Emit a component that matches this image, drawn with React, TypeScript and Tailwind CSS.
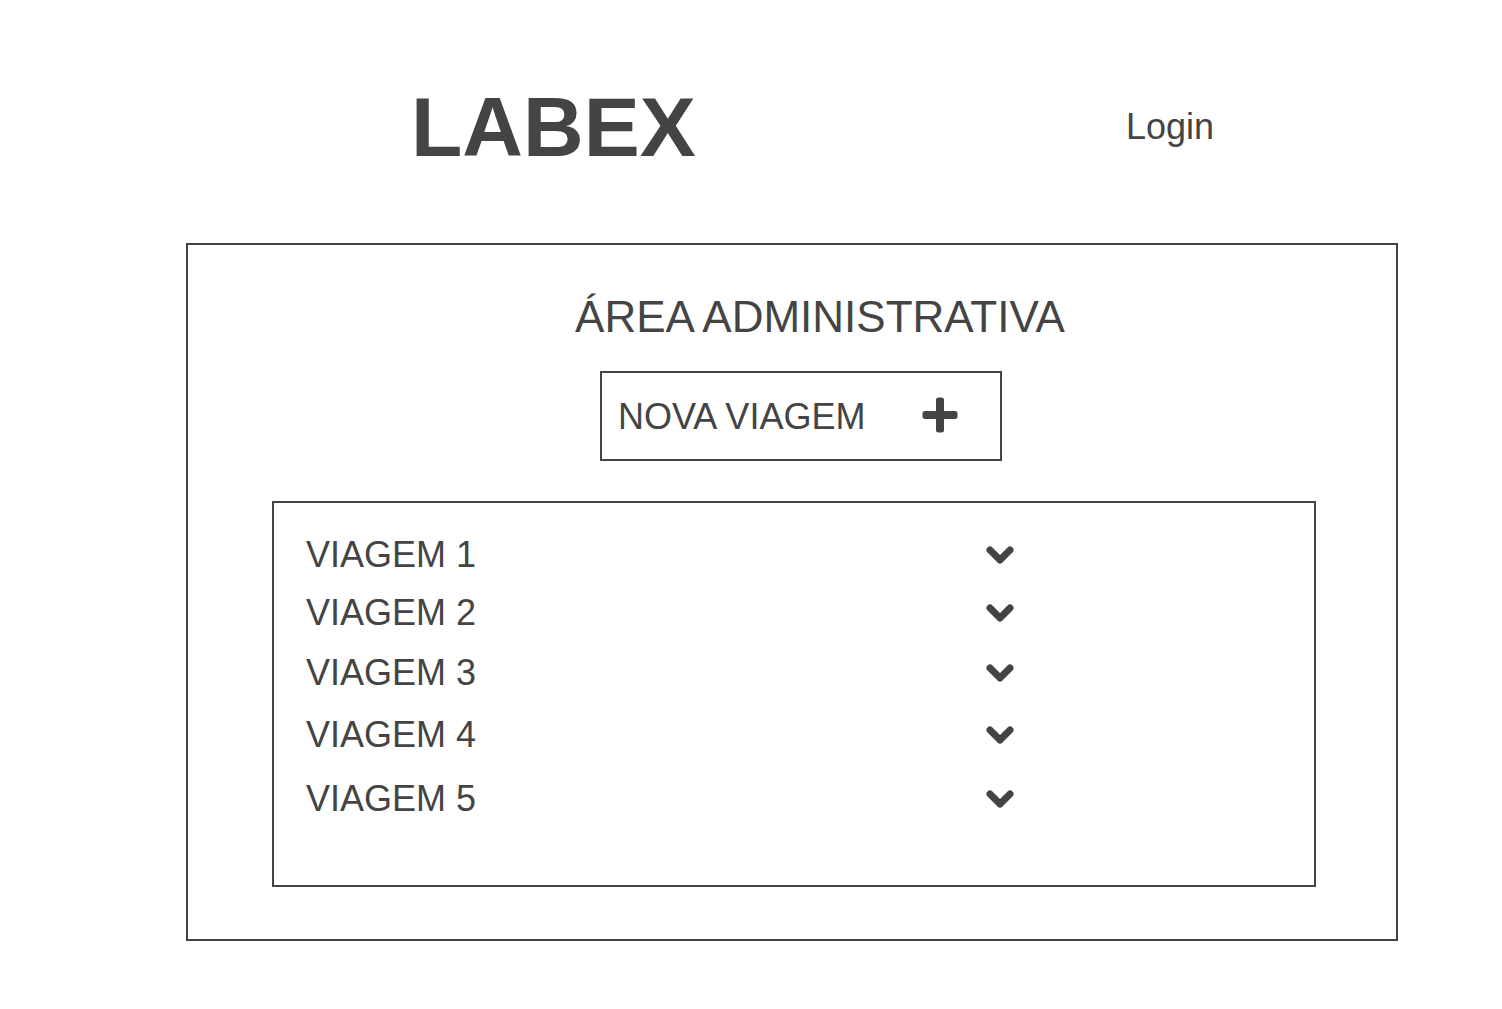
const trips = [
  { name: 'VIAGEM 1', spacing: 'pt-0' },
  { name: 'VIAGEM 2', spacing: 'pt-[18px]' },
  { name: 'VIAGEM 3', spacing: 'pt-5' },
  { name: 'VIAGEM 4', spacing: 'pt-[22px]' },
  { name: 'VIAGEM 5', spacing: 'pt-6' },
];

function PlusIcon() {
  return (
    <svg width="36" height="40" viewBox="0 0 36 40" fill="currentColor" aria-hidden="true">
      <rect x="14" y="0.5" width="8" height="35" rx="2.5" />
      <rect x="0.5" y="14" width="35" height="8" rx="2.5" />
    </svg>
  );
}

function ChevronIcon() {
  return (
    <svg
      width="28"
      height="18"
      viewBox="0 0 28 18"
      fill="none"
      stroke="currentColor"
      strokeWidth="7"
      strokeLinecap="round"
      strokeLinejoin="round"
      aria-hidden="true"
    >
      <path d="M4 4L14 14L24 4" />
    </svg>
  );
}

export default function App() {
  return (
    <div className="bg-white pb-[68px] font-['Liberation_Sans',Arial,sans-serif] text-[#444444]">
      <header className="flex items-center justify-between pt-[77px] pr-72 pl-[411px]">
        <h1 className="text-[84px] leading-[100px] font-bold">LABEX</h1>
        <a href="#login" className="text-[36px] leading-10">
          Login
        </a>
      </header>

      <main className="mt-[66px] mr-[104px] ml-[186px] border-2 border-[#444444] pt-[46px] pr-20 pb-[52px] pl-[84px]">
        <h2 className="pl-[52px] text-center text-[44px] leading-[52px]">ÁREA ADMINISTRATIVA</h2>

        <div className="mt-7 flex justify-center pl-[14px]">
          <button
            type="button"
            className="flex w-[402px] items-center justify-between border-2 border-[#444444] pt-[23px] pr-[42px] pb-[21px] pl-4 text-[36px] leading-[42px]"
          >
            NOVA VIAGEM
            <PlusIcon />
          </button>
        </div>

        <ul className="mt-10 border-2 border-[#444444] pt-8 pr-[300px] pb-[66px] pl-8">
          {trips.map((trip) => (
            <li key={trip.name} className={trip.spacing}>
              <button
                type="button"
                className="flex w-full items-center justify-between text-[36px] leading-10"
              >
                {trip.name}
                <ChevronIcon />
              </button>
            </li>
          ))}
        </ul>
      </main>
    </div>
  );
}
